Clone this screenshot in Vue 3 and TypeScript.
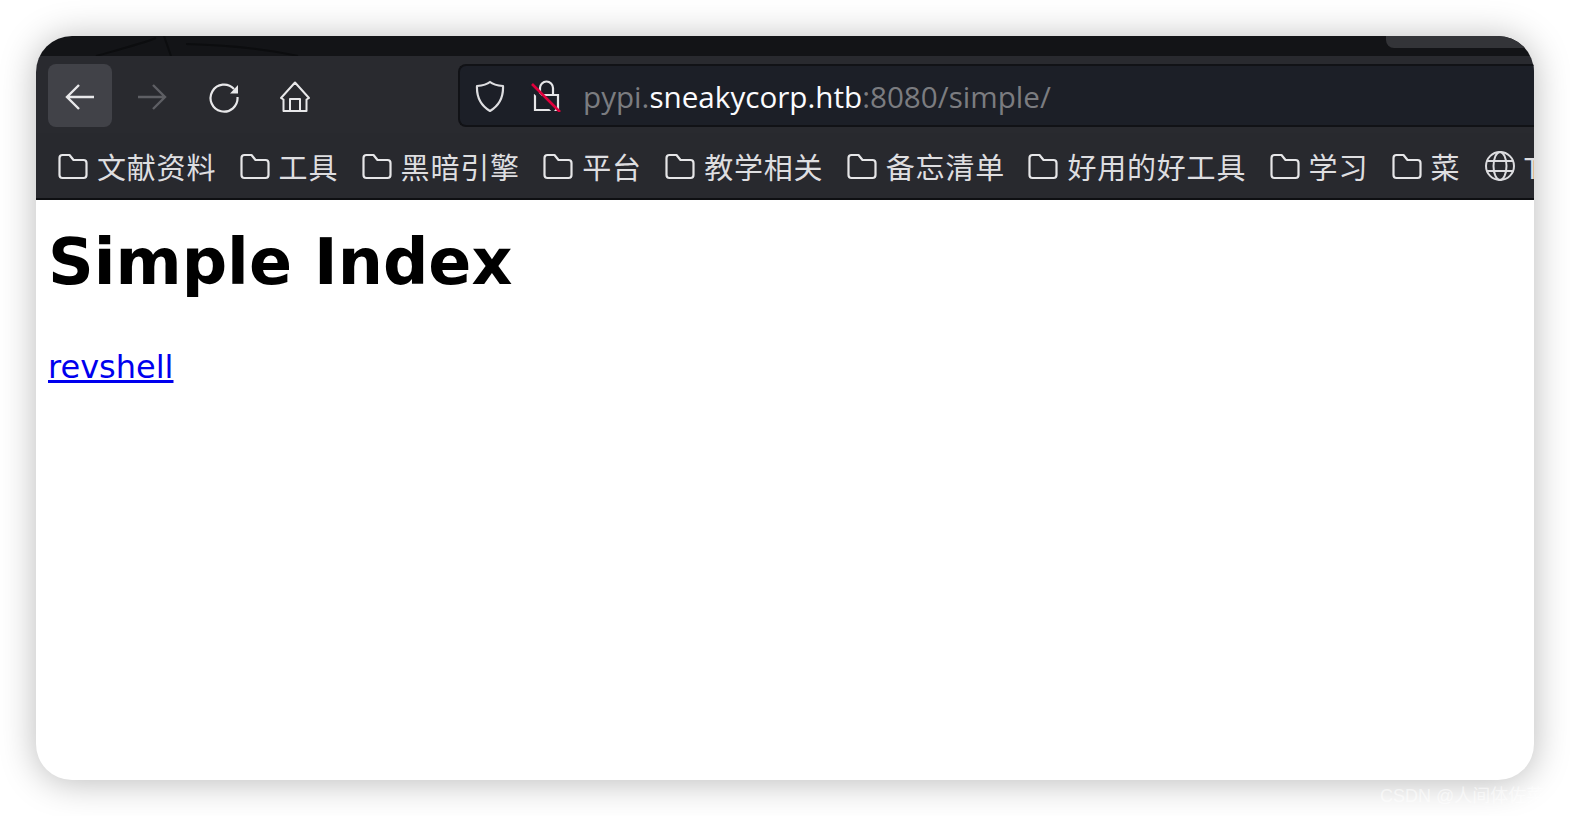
<template>
  <div class="page">
    <div class="window">
      <div class="titlebar">
        <svg class="wallpaper" width="300" height="20" viewBox="0 0 300 20" fill="none">
          <path d="M60 20C85 13 105 8 120 2M128 0l7 20M150 8c40 1 80 5 112 12" stroke="#0c0d0f" stroke-width="2" />
        </svg>
        <div class="tab"></div>
      </div>
      <div class="toolbar">
        <div class="nav">
          <button class="nav-btn active">
            <svg width="32" height="32" viewBox="0 0 32 32" fill="none" stroke="#e8e8ea" stroke-width="2.4">
              <path d="M30 16H3M15 4L3 16l12 12" />
            </svg>
          </button>
          <button class="nav-btn">
            <svg width="32" height="32" viewBox="0 0 32 32" fill="none" stroke="#5e5f64" stroke-width="2.4">
              <path d="M2 16h27M17 4l12 12-12 12" />
            </svg>
          </button>
          <button class="nav-btn">
            <svg width="32" height="32" viewBox="0 0 32 32" fill="none" stroke="#e8e8ea" stroke-width="2.2">
              <path d="M27 8A13.500 13.500 0 1 0 30.500 16" />
              <path d="M23 12.500L31 4v8.500z" fill="#e8e8ea" stroke="none" />
            </svg>
          </button>
          <button class="nav-btn">
            <svg width="32" height="32" viewBox="0 0 32 32" fill="none" stroke="#e8e8ea" stroke-width="2">
              <path d="M16 1.500L2 17l2.500 1.500V30h23V18.500L30 17zM11 30V18h10v12" stroke-linejoin="round" />
            </svg>
          </button>
        </div>
        <div class="address">
          <svg width="32" height="32" viewBox="0 0 32 32" fill="none" stroke="#dddde0" stroke-width="2.2">
            <path d="M16 2c3 2.500 7 3.500 13 4 .5 11-3 19-13 25C6 25 2.500 17 3 6c6-.5 10-1.500 13-4z" stroke-linejoin="round" />
          </svg>
          <svg class="lock" width="32" height="32" viewBox="0 0 32 32" fill="none">
            <path d="M11 15V8a6.500 6.500 0 0 1 13 0v7M6 15h23v15H6z" stroke="#e6e6e8" stroke-width="2.200" />
            <path d="M1 7l24 24" stroke="#1c1f27" stroke-width="4" />
            <path d="M3 4l28 28" stroke="#e0003c" stroke-width="2.600" />
          </svg>
          <span class="url"><span class="dim">pypi.</span>sneakycorp.htb<span class="dim">:8080/simple/</span></span>
        </div>
      </div>
      <div class="bookmarks">
        <div v-for="name in folders" :key="name" class="bookmark">
          <svg width="30" height="30" viewBox="0 0 30 30" fill="none" stroke="#e6e6e8" stroke-width="2.2">
            <path d="M1.500 7a3 3 0 0 1 3-3h7l4 5h10a3 3 0 0 1 3 3v12a3 3 0 0 1-3 3h-21a3 3 0 0 1-3-3z" stroke-linejoin="round" />
          </svg>
          <span>{{ name }}</span>
        </div>
        <div class="bookmark last">
          <svg width="32" height="32" viewBox="0 0 32 32" fill="none" stroke="#dcdcdf" stroke-width="2">
            <circle cx="16" cy="16" r="14" />
            <ellipse cx="16" cy="16" rx="6.500" ry="14" />
            <path d="M3 11h26M3 21h26" />
          </svg>
          <span>T</span>
        </div>
      </div>
      <div class="content">
        <h1>Simple Index</h1>
        <a href="#" class="link">revshell</a>
      </div>
    </div>
    <div class="watermark">CSDN @人间体佐菜</div>
  </div>
</template>

<script setup lang="ts">
const folders: string[] = [
  "文献资料",
  "工具",
  "黑暗引擎",
  "平台",
  "教学相关",
  "备忘清单",
  "好用的好工具",
  "学习",
  "菜",
];
</script>

<style>
html,
body {
  margin: 0;
  background: #fff;
  overflow: hidden;
}
</style>

<style scoped>
.page {
  position: relative;
  box-sizing: border-box;
  width: 1570px;
  height: 816px;
  padding: 36px;
  overflow: hidden;
  background: #fff;
}

.window {
  display: flex;
  flex-direction: column;
  height: 100%;
  border-radius: 36px;
  overflow: hidden;
  background: #fff;
  box-shadow: 0 2px 36px rgba(0, 0, 0, 0.28);
}

.titlebar {
  position: relative;
  flex: none;
  height: 20px;
  background: #131417;
}

.wallpaper {
  position: absolute;
  left: 0;
  top: 0;
}

.tab {
  position: absolute;
  right: 0;
  top: 0;
  width: 148px;
  height: 12px;
  background: #333438;
  border-bottom-left-radius: 8px;
}

.toolbar {
  display: flex;
  flex: none;
  height: 77px;
  box-sizing: border-box;
  padding-top: 8px;
  background: #292a2f;
}

.nav {
  display: flex;
  flex: none;
  gap: 7.5px;
  margin-left: 12px;
  width: 410px;
}

.nav-btn {
  display: flex;
  align-items: center;
  justify-content: center;
  width: 64px;
  height: 63px;
  padding: 2px 0 0;
  background: none;
  border: none;
  border-radius: 8px;
}

.nav-btn.active {
  background: #414248;
}

.address {
  display: flex;
  flex: 1;
  align-items: center;
  height: 63px;
  box-sizing: border-box;
  padding-left: 14px;
  background: #1c1f27;
  border: 2px solid #111216;
  border-right: none;
  border-radius: 8px 0 0 8px;
}

.lock {
  margin-left: 23px;
}

.url {
  margin: 2px 0 0 22px;
  font-family: "Open Sans", sans-serif;
  font-size: 29.65px;
  color: #fbfbfe;
  white-space: nowrap;
}

.dim {
  color: #7b7c80;
}

.bookmarks {
  display: flex;
  flex: none;
  align-items: center;
  gap: 23.4px;
  height: 67px;
  box-sizing: border-box;
  padding: 0 0 0 22px;
  background: #28292e;
  border-bottom: 2px solid #0e0f12;
  overflow: hidden;
}

.bookmark {
  display: flex;
  flex: none;
  align-items: center;
  gap: 9px;
  font-family: "Noto Sans CJK SC", sans-serif;
  font-size: 29px;
  letter-spacing: 0.8px;
  color: #dedee0;
}

.bookmark.last {
  gap: 8px;
}

.content {
  flex: 1;
  padding: 0 12px;
  font-family: "DejaVu Sans", sans-serif;
  color: #000;
}

h1 {
  margin: 22px 0 0;
  font-size: 63.5px;
  line-height: 80px;
  font-weight: 700;
}

.link {
  display: inline-block;
  margin-top: 46px;
  font-size: 32px;
  line-height: 38px;
  color: #0000ee;
}

.watermark {
  position: absolute;
  left: 1380px;
  top: 786px;
  white-space: nowrap;
  font-family: "Liberation Sans", "Noto Sans CJK SC", sans-serif;
  font-size: 18px;
  line-height: 20px;
  color: rgba(255, 255, 255, 0.55);
}
</style>
